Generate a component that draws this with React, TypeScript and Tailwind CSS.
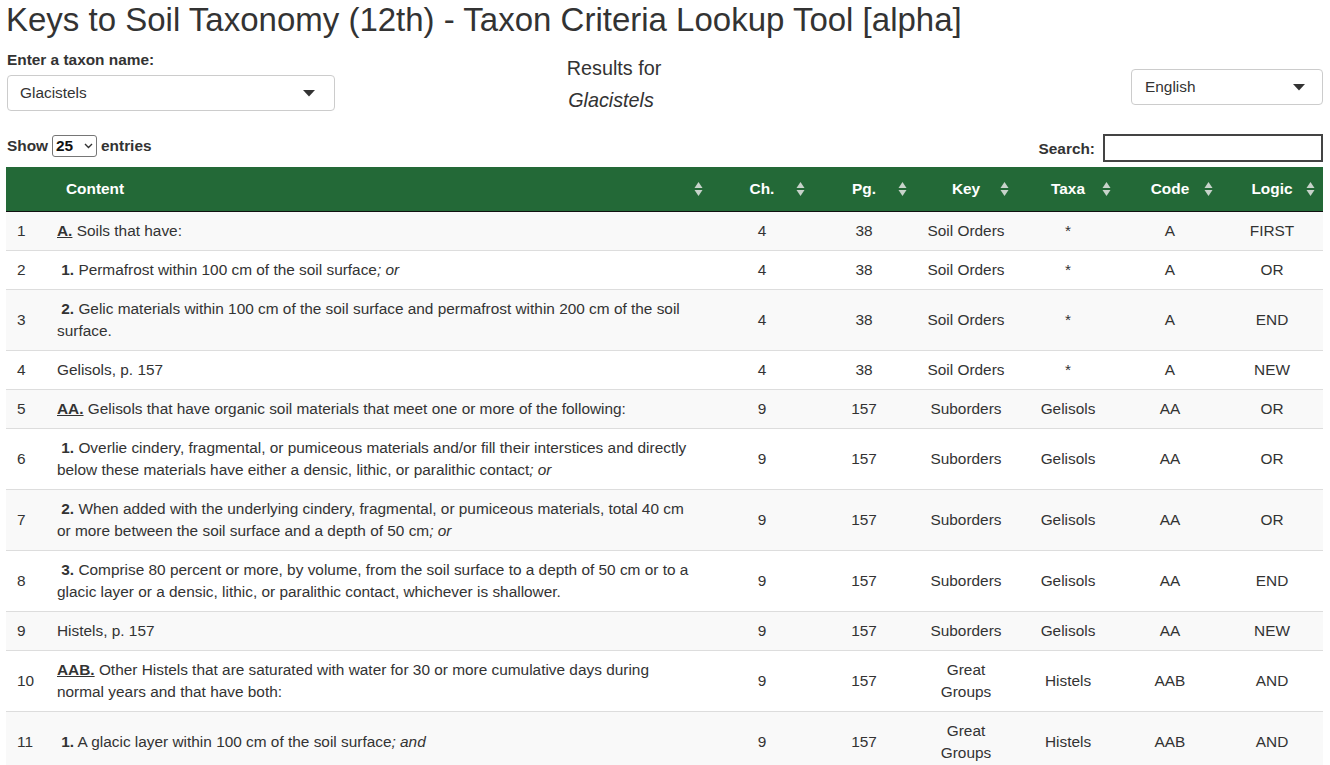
import React from 'react';

type Row = {
  n: number;
  content: React.ReactNode;
  ch: string;
  pg: string;
  keyName: string;
  taxa: string;
  code: string;
  logic: string;
};

const Code = ({ children }: { children: React.ReactNode }) => (
  <b className="underline">{children}</b>
);

const rows: Row[] = [
  { n: 1, content: <><Code>A.</Code> Soils that have:</>, ch: '4', pg: '38', keyName: 'Soil Orders', taxa: '*', code: 'A', logic: 'FIRST' },
  { n: 2, content: <>&nbsp;<b>1.</b> Permafrost within 100 cm of the soil surface<i>; or</i></>, ch: '4', pg: '38', keyName: 'Soil Orders', taxa: '*', code: 'A', logic: 'OR' },
  { n: 3, content: <>&nbsp;<b>2.</b> Gelic materials within 100 cm of the soil surface and permafrost within 200 cm of the soil surface.</>, ch: '4', pg: '38', keyName: 'Soil Orders', taxa: '*', code: 'A', logic: 'END' },
  { n: 4, content: <>Gelisols, p. 157</>, ch: '4', pg: '38', keyName: 'Soil Orders', taxa: '*', code: 'A', logic: 'NEW' },
  { n: 5, content: <><Code>AA.</Code> Gelisols that have organic soil materials that meet one or more of the following:</>, ch: '9', pg: '157', keyName: 'Suborders', taxa: 'Gelisols', code: 'AA', logic: 'OR' },
  { n: 6, content: <>&nbsp;<b>1.</b> Overlie cindery, fragmental, or pumiceous materials and/or fill their interstices and directly below these materials have either a densic, lithic, or paralithic contact<i>; or</i></>, ch: '9', pg: '157', keyName: 'Suborders', taxa: 'Gelisols', code: 'AA', logic: 'OR' },
  { n: 7, content: <>&nbsp;<b>2.</b> When added with the underlying cindery, fragmental, or pumiceous materials, total 40 cm or more between the soil surface and a depth of 50 cm<i>; or</i></>, ch: '9', pg: '157', keyName: 'Suborders', taxa: 'Gelisols', code: 'AA', logic: 'OR' },
  { n: 8, content: <>&nbsp;<b>3.</b> Comprise 80 percent or more, by volume, from the soil surface to a depth of 50 cm or to a glacic layer or a densic, lithic, or paralithic contact, whichever is shallower.</>, ch: '9', pg: '157', keyName: 'Suborders', taxa: 'Gelisols', code: 'AA', logic: 'END' },
  { n: 9, content: <>Histels, p. 157</>, ch: '9', pg: '157', keyName: 'Suborders', taxa: 'Gelisols', code: 'AA', logic: 'NEW' },
  { n: 10, content: <><Code>AAB.</Code> Other Histels that are saturated with water for 30 or more cumulative days during normal years and that have both:</>, ch: '9', pg: '157', keyName: 'Great Groups', taxa: 'Histels', code: 'AAB', logic: 'AND' },
  { n: 11, content: <>&nbsp;<b>1.</b> A glacic layer within 100 cm of the soil surface<i>; and</i></>, ch: '9', pg: '157', keyName: 'Great Groups', taxa: 'Histels', code: 'AAB', logic: 'AND' },
];

const SortIcon = () => (
  <svg width="9" height="16" viewBox="0 0 9 16" className="absolute right-[8px] top-1/2 -translate-y-1/2">
    <path d="M4.5 1 L8.5 7 L0.5 7 Z" fill="#c8d3cb" />
    <path d="M4.5 15 L8.5 9 L0.5 9 Z" fill="#c8d3cb" />
  </svg>
);

const Caret = () => (
  <svg width="12" height="7" viewBox="0 0 12 7">
    <path d="M0 0 L12 0 L6 6.5 Z" fill="#333" />
  </svg>
);

const cols = ['Ch.', 'Pg.', 'Key', 'Taxa', 'Code', 'Logic'];

export default function App() {
  return (
    <div className="bg-white min-h-[765px] text-[#333] font-['Liberation_Sans',Arial,sans-serif] text-[15.4px] leading-[22px]">
      <h2 className="mt-[2px] ml-[6px] text-[33px] leading-[36px] font-normal">
        Keys to Soil Taxonomy (12th) - Taxon Criteria Lookup Tool [alpha]
      </h2>

      <div className="flex items-start px-[7px] mt-[11px]">
        <div className="w-[328px]">
          <div className="font-bold text-[15.4px] leading-[22px]">Enter a taxon name:</div>
          <div className="mt-[4px] h-[36px] border border-[#ccc] rounded-[4px] flex items-center justify-between pl-[12px] pr-[19px]">
            <span>Glacistels</span>
            <Caret />
          </div>
        </div>
        <div className="ml-[199px] w-[160px] flex flex-col items-center mt-[8px]">
          <div className="text-center text-[19.8px] leading-[22px]">Results for</div>
          <div className="text-center text-[19.8px] leading-[22px] italic mt-[10px] pr-[6px]">Glacistels</div>
        </div>
        <div className="ml-auto w-[192px] mt-[20px] h-[36px] border border-[#ccc] rounded-[4px] flex items-center justify-between pl-[13px] pr-[17px]">
          <span>English</span>
          <Caret />
        </div>
      </div>

      <div className="flex items-end justify-between px-[7px] mt-[23px]">
        <div className="flex items-center font-bold text-[15.4px] mb-[10px]">
          <span>Show</span>
          <span className="mx-[4px] h-[22px] w-[45px] border border-[#767676] rounded-[3px] flex items-center justify-between px-[3px] text-[#111]">
            <span>25</span>
            <svg width="9" height="6" viewBox="0 0 9 6">
              <path d="M1 1 L4.5 4.5 L8 1" stroke="#333" strokeWidth="1.4" fill="none" />
            </svg>
          </span>
          <span>entries</span>
        </div>
        <div className="flex items-center font-bold mb-[5px]">
          <span className="mt-[2px]">Search:</span>
          <span className="ml-[8px] w-[220px] h-[28px] border-2 border-[#444] bg-white block" />
        </div>
      </div>

      <table className="ml-[6px] w-[1317px] table-fixed border-collapse">
        <colgroup>
          <col className="w-[42px]" />
          <col className="w-[663px]" />
          {cols.map((c) => (
            <col key={c} className="w-[102px]" />
          ))}
        </colgroup>
        <thead>
          <tr className="bg-[#236937] text-white border-b border-[#111]">
            <th className="py-[11px]" />
            <th className="relative py-[11px] pl-[18px] text-left font-bold">
              Content
              <SortIcon />
            </th>
            {cols.map((c) => (
              <th key={c} className="relative py-[11px] text-center font-bold">
                {c}
                <SortIcon />
              </th>
            ))}
          </tr>
        </thead>
        <tbody>
          {rows.map((r, i) => (
            <tr key={r.n} className={`${i % 2 === 0 ? 'bg-[#f9f9f9]' : 'bg-white'} border-t border-[#ddd] first:border-t-0`}>
              <td className="py-2 pl-[11px] pr-[4px] align-middle">{r.n}</td>
              <td className="py-2 pl-[9px] pr-[20px] align-middle">{r.content}</td>
              <td className="py-2 px-[10px] text-center align-middle">{r.ch}</td>
              <td className="py-2 px-[10px] text-center align-middle">{r.pg}</td>
              <td className="py-2 px-[10px] text-center align-middle">{r.keyName}</td>
              <td className="py-2 px-[10px] text-center align-middle">{r.taxa}</td>
              <td className="py-2 px-[10px] text-center align-middle">{r.code}</td>
              <td className="py-2 px-[10px] text-center align-middle">{r.logic}</td>
            </tr>
          ))}
        </tbody>
      </table>
    </div>
  );
}
